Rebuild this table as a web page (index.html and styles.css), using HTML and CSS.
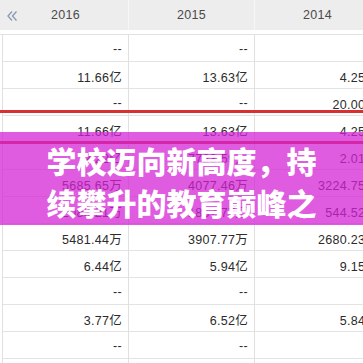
FILE: index.html
```html
<!DOCTYPE html>
<html lang="zh">
<head>
<meta charset="utf-8">
<title>学校迈向新高度</title>
<link rel="stylesheet" href="styles.css">
</head>
<body>
<div class="page">
  <div class="table">
    <div class="head">
      <div class="hcell">
        <svg class="back" width="12" height="12" viewBox="0 0 12 12" aria-hidden="true">
          <path d="M6 1.5 L2 6 L6 10.5 M10.5 1.5 L6.5 6 L10.5 10.5" fill="none" stroke="#8d9db3" stroke-width="1.4"/>
        </svg>
        <span>2016</span>
      </div>
      <div class="hcell"><span>2015</span></div>
      <div class="hcell"><span>2014</span></div>
    </div>
    <div class="body">
      <div class="cell">--</div><div class="cell">--</div><div class="cell">--</div>
      <div class="cell">11.66亿</div><div class="cell">13.63亿</div><div class="cell">4.25亿</div>
      <div class="cell">--</div><div class="cell">--</div><div class="cell">20.00亿</div>
      <div class="cell">11.66亿</div><div class="cell">13.63亿</div><div class="cell">4.25亿</div>
      <div class="cell">2.22亿</div><div class="cell">7723.59万</div><div class="cell">2.01亿</div>
      <div class="cell">5685.65万</div><div class="cell">4077.46万</div><div class="cell">3224.75万</div>
      <div class="cell">2083.21万</div><div class="cell">1867.77万</div><div class="cell">544.52万</div>
      <div class="cell">5481.44万</div><div class="cell">3907.77万</div><div class="cell">2680.23万</div>
      <div class="cell">6.44亿</div><div class="cell">5.94亿</div><div class="cell">9.15亿</div>
      <div class="cell">--</div><div class="cell">--</div><div class="cell">--</div>
      <div class="cell">3.77亿</div><div class="cell">6.52亿</div><div class="cell">5.84亿</div>
      <div class="cell">--</div><div class="cell">--</div><div class="cell">--</div>
      <div class="cell"></div><div class="cell"></div><div class="cell"></div>
    </div>
  </div>
  <div class="mark mark-top"></div>
  <div class="mark mark-bottom"></div>
  <div class="banner">
    <p>学校迈向新高度，持</p>
    <p>续攀升的教育巅峰之</p>
  </div>
</div>
</body>
</html>
```
FILE: styles.css
```css
* { box-sizing: border-box; }
html, body {
  margin: 0;
  padding: 0;
  background: #ffffff;
}
body {
  width: 363px;
  height: 363px;
  overflow: hidden;
  font-family: "Liberation Sans", "Noto Sans CJK SC", sans-serif;
}
.page {
  position: relative;
  width: 363px;
  height: 363px;
  overflow: hidden;
}
.table {
  width: 400px;
}
.head {
  display: grid;
  grid-template-columns: 3px repeat(3, 126px);
  height: 35px;
  border-bottom: 1px solid #e2e2e2;
  background: linear-gradient(#ededed 0 30px, #ffffff 30px);
}
.head::before {
  content: "";
}
.hcell {
  position: relative;
  display: flex;
  align-items: center;
  justify-content: center;
  height: 30px;
  border-right: 1px solid #f7f7f7;
  font-size: 12.5px;
  color: #4a4a4a;
  letter-spacing: 0.3px;
}
.back {
  position: absolute;
  left: 3px;
  top: 10px;
}
.body {
  display: grid;
  grid-template-columns: 126px 126px 130px;
  margin-left: 2px;
  border-left: 1px solid #e0e0e0;
}
.cell {
  height: 27px;
  border-right: 1px solid #e0e0e0;
  border-bottom: 1px solid #e3e3e3;
  display: flex;
  align-items: center;
  justify-content: flex-end;
  padding: 2px 6px 0 0;
  font-size: 12.5px;
  color: #2b2b2b;
  letter-spacing: 0.3px;
}
.mark {
  position: absolute;
  left: 0;
  width: 363px;
  height: 3px;
  background: #d8302e;
}
.mark-top { top: 110px; }
.mark-bottom { top: 141px; }
.banner {
  position: absolute;
  left: 0;
  top: 132px;
  width: 363px;
  height: 93px;
  padding-top: 7px;
  background: rgba(212, 34, 212, 0.74);
  text-align: center;
}
.banner p {
  margin: 0;
  font-family: "Noto Sans CJK SC", sans-serif;
  font-weight: 900;
  font-size: 30px;
  line-height: 42px;
  color: #ffffff;
}
```
